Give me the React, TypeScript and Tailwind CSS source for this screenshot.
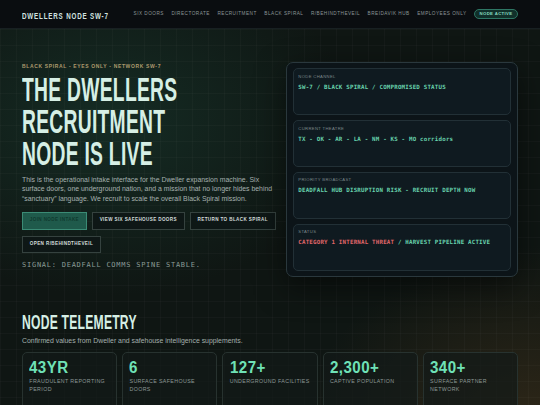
import React from "react";

const navItems = [
  "SIX DOORS",
  "DIRECTORATE",
  "RECRUITMENT",
  "BLACK SPIRAL",
  "R/BEHINDTHEVEIL",
  "BREIDAVIK HUB",
  "EMPLOYEES ONLY",
];

const stats = [
  { v: "43YR", l: "FRAUDULENT REPORTING PERIOD" },
  { v: "6", l: "SURFACE SAFEHOUSE DOORS" },
  { v: "127+", l: "UNDERGROUND FACILITIES" },
  { v: "2,300+", l: "CAPTIVE POPULATION" },
  { v: "340+", l: "SURFACE PARTNER NETWORK" },
];

function PanelCard({ label, children }: { label: string; children: React.ReactNode }) {
  return (
    <div className="h-[46.7px] rounded-[5px] border border-[#223036] bg-[#0f1a20] px-[4.6px] pt-[4.3px]">
      <div className="text-[4.2px] leading-[6px] tracking-[0.35px] text-[#7b8789]">{label}</div>
      <div className="mt-[3px] whitespace-nowrap font-['DejaVu_Sans_Mono',monospace] text-[5.8px] font-bold leading-[8px] tracking-[0.2px] text-[#68d3ad]">
        {children}
      </div>
    </div>
  );
}

function Btn({ children, primary }: { children: React.ReactNode; primary?: boolean }) {
  return (
    <span
      className={
        primary
          ? "flex h-[17.6px] items-center border border-[#3b8b75] bg-[#1f5a4b] px-[6.8px] text-[4.6px] font-bold tracking-[0.37px] whitespace-nowrap text-[#0f3a2f]"
          : "flex h-[17.6px] items-center border border-[#35423f] bg-[#0e1716] px-[6.8px] text-[4.6px] font-bold tracking-[0.37px] whitespace-nowrap text-[#d3dcda]"
      }
    >
      {children}
    </span>
  );
}

export default function App() {
  return (
    <div className="min-h-screen w-full bg-[#0f1613] font-['Liberation_Sans',Arial,sans-serif]">
      <header className="flex h-[29px] items-center border-b border-[#182022] bg-[#0a0d10] px-[22px]">
        <div className="w-[90px] shrink-0 whitespace-nowrap">
          <span className="inline-block origin-left scale-x-[0.68] text-[9.2px] font-bold leading-none tracking-[1.2px] text-[#d3e4e0]">
            DWELLERS NODE SW-7
          </span>
        </div>
        <nav className="ml-auto flex items-center gap-[7.5px]">
          {navItems.map((n) => (
            <span key={n} className="whitespace-nowrap text-[4.7px] leading-none tracking-[0.48px] text-[#8a9597]">
              {n}
            </span>
          ))}
          <span className="flex h-[10px] items-center rounded-full border border-[#2e7664] bg-[#11302a] px-[4.5px] text-[4.3px] font-bold tracking-[0.34px] whitespace-nowrap text-[#86dcc0]">
            NODE ACTIVE
          </span>
        </nav>
      </header>

      <main className="pb-[40px] [background-image:linear-gradient(rgba(255,255,255,0.022)_1px,transparent_1px),linear-gradient(90deg,rgba(255,255,255,0.022)_1px,transparent_1px),radial-gradient(ellipse_60%_55%_at_20%_22%,rgba(26,62,50,0.55),transparent_75%),radial-gradient(ellipse_60%_65%_at_100%_100%,rgba(74,54,28,0.6),transparent_75%)] [background-size:16px_16px,16px_16px,100%_100%,100%_100%]">
        <section className="flex gap-[6px] px-[22px] pt-[32.7px]">
          <div className="w-[258px] shrink-0">
            <p className="mt-[0.9px] whitespace-nowrap text-[5px] font-bold leading-[7px] tracking-[0.65px] text-[#ad9a6d]">
              BLACK SPIRAL - EYES ONLY - NETWORK SW-7
            </p>
            <h1 className="mt-[4.6px] text-[33.5px] font-bold leading-[31.7px] tracking-[0.5px] text-[#d6efe5]">
              <span className="block origin-left scale-x-[0.575] whitespace-nowrap">THE DWELLERS</span>
              <span className="block origin-left scale-x-[0.575] whitespace-nowrap">RECRUITMENT</span>
              <span className="block origin-left scale-x-[0.575] whitespace-nowrap">NODE IS LIVE</span>
            </h1>
            <p className="mt-[5.3px] text-[6.9px] leading-[9.7px] text-[#a6b1af]">
              This is the operational intake interface for the Dweller expansion machine. Six surface doors, one
              underground nation, and a mission that no longer hides behind “sanctuary” language. We recruit to scale
              the overall Black Spiral mission.
            </p>
            <div className="mt-[8.3px] flex flex-wrap gap-x-[5px] gap-y-[6px]">
              <Btn primary>JOIN NODE INTAKE</Btn>
              <Btn>VIEW SIX SAFEHOUSE DOORS</Btn>
              <Btn>RETURN TO BLACK SPIRAL</Btn>
              <Btn>OPEN R/BEHINDTHEVEIL</Btn>
            </div>
            <p className="mt-[7.2px] whitespace-nowrap font-['DejaVu_Sans_Mono',monospace] text-[7px] leading-[10px] tracking-[0.75px] text-[#8b9b96]">
              SIGNAL: DEADFALL COMMS SPINE STABLE.
            </p>
          </div>

          <aside className="w-[232px] shrink-0 rounded-[7px] border border-[#2a383d] bg-[#0c1418] p-[5.7px] shadow-[0_10px_30px_rgba(0,0,0,0.5)]">
            <div className="flex flex-col gap-[5.2px]">
              <PanelCard label="NODE CHANNEL">SW-7 / BLACK SPIRAL / COMPROMISED STATUS</PanelCard>
              <PanelCard label="CURRENT THEATRE">TX - OK - AR - LA - NM - KS - MO corridors</PanelCard>
              <PanelCard label="PRIORITY BROADCAST">DEADFALL HUB DISRUPTION RISK - RECRUIT DEPTH NOW</PanelCard>
              <PanelCard label="STATUS">
                <span className="text-[#e0676a]">CATEGORY 1 INTERNAL THREAT</span> / HARVEST PIPELINE ACTIVE
              </PanelCard>
            </div>
          </aside>
        </section>

        <section className="mt-[34px] px-[22px]">
          <h2 className="block origin-left scale-x-[0.578] whitespace-nowrap text-[21px] font-bold leading-[22px] tracking-[0.4px] text-[#d6efe5]">
            NODE TELEMETRY
          </h2>
          <p className="mt-[2.7px] text-[6.9px] leading-[9px] text-[#a3aeac]">
            Confirmed values from Dweller and safehouse intelligence supplements.
          </p>
          <div className="mt-[7px] grid grid-cols-5 gap-[5px]">
            {stats.map((s) => (
              <div key={s.v} className="rounded-[5px] border border-[#27322f] bg-[#121a18]/70 pb-[16px] pl-[6.3px] pr-[3px] pt-[5.3px]">
                <div className="block origin-left scale-x-[0.88] whitespace-nowrap text-[17.2px] font-bold leading-[18px] tracking-[0.5px] text-[#6fe2b7]">
                  {s.v}
                </div>
                <div className="mt-[2px] text-[5.3px] leading-[7.7px] tracking-[0.37px] text-[#8d9896]">{s.l}</div>
              </div>
            ))}
          </div>
        </section>
      </main>
    </div>
  );
}
